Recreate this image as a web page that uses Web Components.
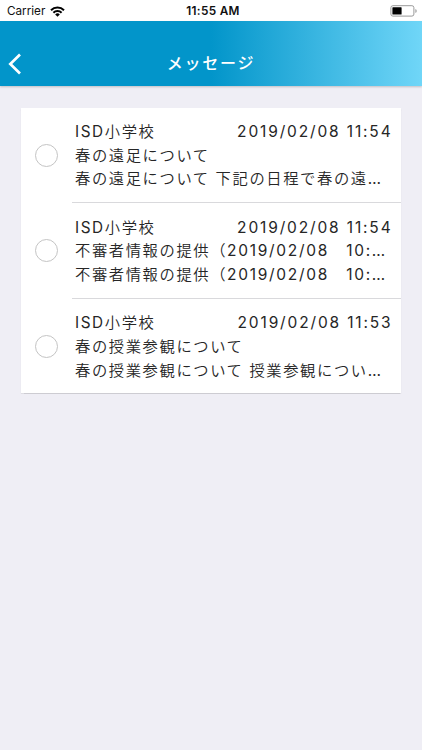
<!DOCTYPE html>
<html lang="ja">
<head>
<meta charset="utf-8">
<meta name="viewport" content="width=device-width, initial-scale=1">
<title>メッセージ</title>
<style>
  html, body { height: 100%; }
  body {
    margin: 0;
    overflow: hidden;
    background: #efeef5;
    color: #262626;
    font-family: Inter, "Noto Sans CJK JP", sans-serif;
  }
</style>
</head>
<body>
<message-app></message-app>

<script>
class StatusBar extends HTMLElement {
  css = () => /* css */ `
  :host {
    display: grid;
    grid-template-columns: 1fr auto 1fr;
    align-items: center;
    height: 20.5px;
    padding: 0 5px 0 7px;
    background: #fff;
    color: #111;
    font-size: 11.7px;
    line-height: 20px;
    white-space: nowrap;
  }
  .left { display: flex; align-items: center; gap: 5px; padding-top: 1px; }
  .time {
    padding: 1px 0 0 2px;
    font-weight: 600;
    font-size: 11.8px;
    letter-spacing: .3px;
  }
  .battery { justify-self: end; }
  svg { display: block; }
  `;

  html = () => /* html */ `
  <style>${this.css()}</style>
  <div class="left">
    <span>Carrier</span>
    <svg width="15" height="11" viewBox="0 0 15 11" fill="none" stroke="#000" stroke-width="2">
      <path d="M1 4.2a9.2 9.2 0 0 1 13 0"/>
      <path d="M3.4 6.7a5.8 5.8 0 0 1 8.2 0"/>
      <path d="M7.5 10.7 5.2 8.4a3.2 3.2 0 0 1 4.6 0z" fill="#000" stroke="none"/>
    </svg>
  </div>
  <span class="time">11:55 AM</span>
  <svg class="battery" width="27" height="12" viewBox="0 0 27 12">
    <rect x=".9" y=".7" width="23" height="10.4" rx="2" fill="none" stroke="#999"/>
    <rect x="2.4" y="2.2" width="9.2" height="7.4" rx=".6" fill="#000"/>
    <path d="M25.4 4a2.2 2.2 0 0 1 0 4z" fill="#999"/>
  </svg>
  `;

  constructor() {
    super();
    this.attachShadow({ mode: "open" });
  }

  connectedCallback() {
    this.shadowRoot.innerHTML = this.html();
  }
}

class NavHeader extends HTMLElement {
  css = () => /* css */ `
  :host {
    display: grid;
    grid-template-columns: 40px 1fr 40px;
    align-items: center;
    box-sizing: border-box;
    height: 65.5px;
    padding-top: 20px;
    background: linear-gradient(90deg, #0295ca 50%, #70d6f8);
    box-shadow: 0 1px 2px rgba(0, 0, 0, .2);
    color: #fff;
  }
  button {
    padding: 1px 0 0 8px;
    border: 0;
    background: none;
    color: inherit;
  }
  svg { display: block; }
  .title {
    text-align: center;
    font-size: 16px;
    font-weight: 500;
    letter-spacing: 1.8px;
    line-height: 24px;
  }
  `;

  html = () => /* html */ `
  <style>${this.css()}</style>
  <button aria-label="戻る">
    <svg width="14" height="22" viewBox="0 0 14 22" fill="none" stroke="currentColor" stroke-width="2.7">
      <path d="M12 1.5 2.3 11l9.7 9.5"/>
    </svg>
  </button>
  <div class="title"><slot></slot></div>
  `;

  constructor() {
    super();
    this.attachShadow({ mode: "open" });
  }

  connectedCallback() {
    this.shadowRoot.innerHTML = this.html();
  }
}

class MessageItem extends HTMLElement {
  css = () => /* css */ `
  :host {
    display: grid;
    grid-template-columns: 51px 1fr;
    height: 95.7px;
    font-family: Inter, "Noto Sans CJK JP DemiLight", "Noto Sans CJK JP", sans-serif;
    font-size: 15.3px;
    letter-spacing: 1.6px;
    line-height: 23.6px;
    white-space: nowrap;
  }
  .check {
    margin-top: 36px;
    justify-self: center;
    box-sizing: border-box;
    width: 23px;
    height: 23px;
    border: 1px solid #c4c4c4;
    border-radius: 50%;
  }
  .body {
    box-sizing: border-box;
    padding: 12.5px 8px 0 3px;
    border-bottom: 1px solid #d9d9dc;
  }
  :host(:last-of-type) { height: 94.5px; }
  :host(:last-of-type) .body { border-bottom: 0; }
  .head { display: flex; justify-content: space-between; }
  .line { height: 23.6px; }
  `;

  html = () => /* html */ `
  <style>${this.css()}</style>
  <span class="check"></span>
  <div class="body">
    <div class="head line">
      <slot name="sender"></slot>
      <slot name="date"></slot>
    </div>
    <div class="line"><slot name="subject"></slot></div>
    <div class="line"><slot name="preview"></slot></div>
  </div>
  `;

  constructor() {
    super();
    this.attachShadow({ mode: "open" });
  }

  connectedCallback() {
    this.shadowRoot.innerHTML = this.html();
  }
}

class MessageApp extends HTMLElement {
  messages = [
    {
      sender: "ISD小学校",
      date: "2019/02/08 11:54",
      subject: "春の遠足について",
      preview: "春の遠足について 下記の日程で春の遠…",
    },
    {
      sender: "ISD小学校",
      date: "2019/02/08 11:54",
      subject: "不審者情報の提供（<span class='num'>2019/02/08　10:…</span>",
      preview: "不審者情報の提供（<span class='num'>2019/02/08　10:…</span>",
    },
    {
      sender: "ISD小学校",
      date: "2019/02/08 11:53",
      subject: "春の授業参観について",
      preview: "春の授業参観について 授業参観につい…",
    },
  ];

  css = () => /* css */ `
  :host {
    display: flex;
    flex-direction: column;
    height: 100%;
  }
  .card {
    margin: 21.5px 21.5px 0 21px;
    background: #fff;
    box-shadow: 0 .5px 1px rgba(0, 0, 0, .14);
  }
  .num {
    font-size: 15.5px;
    letter-spacing: 1.7px;
  }
  .date { letter-spacing: 1.85px; }
  `;

  item = (m) => /* html */ `
  <message-item>
    <span slot="sender">${m.sender}</span>
    <span slot="date" class="num date">${m.date}</span>
    <span slot="subject">${m.subject}</span>
    <span slot="preview">${m.preview}</span>
  </message-item>
  `;

  html = () => /* html */ `
  <style>${this.css()}</style>
  <status-bar></status-bar>
  <nav-header>メッセージ</nav-header>
  <div class="card">${this.messages.map(this.item).join("")}</div>
  `;

  constructor() {
    super();
    this.attachShadow({ mode: "open" });
  }

  connectedCallback() {
    this.shadowRoot.innerHTML = this.html();
  }
}

customElements.define("status-bar", StatusBar);
customElements.define("nav-header", NavHeader);
customElements.define("message-item", MessageItem);
customElements.define("message-app", MessageApp);
</script>
</body>
</html>
